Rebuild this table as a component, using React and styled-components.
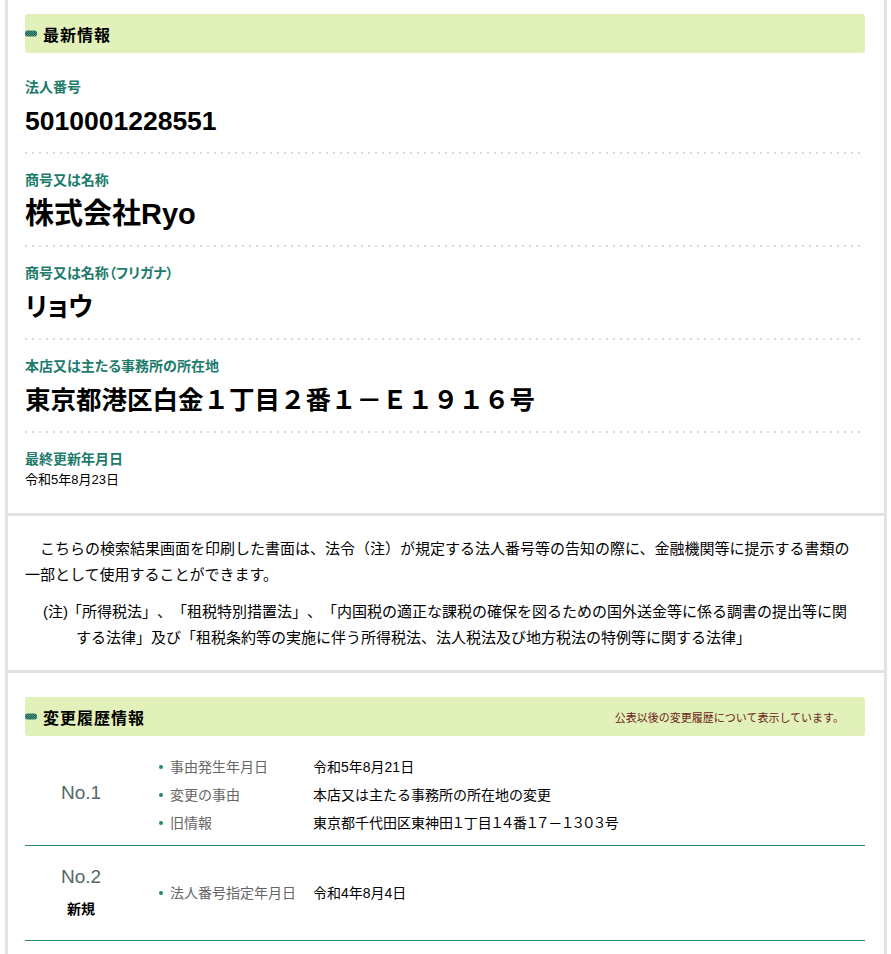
import React from 'react';
import styled, { createGlobalStyle } from 'styled-components';

const GlobalStyle = createGlobalStyle`
  body {
    margin: 0;
    background: #fff;
    color: #000;
    font-family: "Liberation Sans", "Noto Sans CJK JP", sans-serif;
    text-spacing-trim: space-all;
  }
`;

const Page = styled.div`
  margin: 0 4px 0 5px;
  min-height: 954px;
  border-left: 3px solid #e3e3e3;
  border-right: 3px solid #e3e3e3;
`;

const Section = styled.section`
  padding: ${(p) => p.$top}px 19px ${(p) => p.$bottom}px 17px;

  & + & {
    border-top: 3px solid #e3e3e3;
  }
`;

const Heading = styled.div`
  display: flex;
  align-items: center;
  height: 39px;
  padding-right: 21px;
  margin-bottom: ${(p) => p.$gap || 0}px;
  background: #e1f1b9;
  border-radius: 3px;
`;

const HeadingTitle = styled.h2`
  flex: 1;
  margin: 0 0 0 6px;
  font-size: 16px;
  font-weight: bold;
  letter-spacing: 1px;
`;

const HeadingNote = styled.span`
  font-size: 11px;
  color: #6a2418;
`;

const Field = styled.div`
  padding: 17px 0 16px;
  background-image: linear-gradient(to right, #d9d9d9 2px, transparent 2px);
  background-size: 7px 2px;
  background-repeat: repeat-x;
  background-position: left bottom;

  &:last-child {
    background: none;
  }
`;

const FieldLabel = styled.div`
  font-size: 14px;
  line-height: 18px;
  font-weight: bold;
  color: #1d7b6b;
  font-feature-settings: "palt";
  margin-bottom: ${(p) => (p.$small ? 3 : 8)}px;
`;

const FieldValue = styled.div`
  font-size: ${(p) => p.$size}px;
  line-height: 34px;
  font-weight: bold;
  font-feature-settings: ${(p) => (p.$prop ? '"palt"' : 'normal')};
  white-space: nowrap;
`;

const SmallValue = styled.div`
  font-size: 13px;
  line-height: 18px;
`;

const Notice = styled.p`
  margin: 0;
  padding-right: 10px;
  font-size: 15px;
  line-height: 26px;
  text-indent: 1em;
`;

const Note = styled.p`
  margin: 11px 0 0;
  padding: 0 10px 0 51px;
  text-indent: -33px;
  font-size: 15px;
  line-height: 26px;
`;

const NoteMark = styled.span`
  display: inline-block;
  width: 24px;
  text-indent: 0;
`;

const History = styled.div`
  margin-top: 9px;
`;

const HistoryRow = styled.div`
  display: grid;
  grid-template-columns: 112px 1fr;
  align-items: center;
  padding: 8px 0;
  border-bottom: 1px solid #2a8c6c;
`;

const RowHead = styled.div`
  padding: 8px 0 12px;
  text-align: center;
`;

const RowNo = styled.div`
  font-size: 19px;
  line-height: 30px;
  color: #56686a;
`;

const RowTag = styled.div`
  margin-top: 6px;
  font-size: 14px;
  line-height: 22px;
  font-weight: bold;
`;

const ItemList = styled.ul`
  list-style: none;
  margin: 0;
  padding: 0 0 0 22px;
`;

const Item = styled.li`
  display: flex;
  align-items: center;
  font-size: 14px;
  line-height: 28px;

  &::before {
    content: '';
    width: 4px;
    height: 4px;
    margin-right: 7px;
    border-radius: 50%;
    background: #1f8a68;
  }
`;

const ItemLabel = styled.span`
  width: 143px;
  flex-shrink: 0;
  color: #666;
`;

const ItemValue = styled.span`
  font-feature-settings: ${(p) => (p.$prop ? '"palt"' : 'normal')};
`;

const MarkIcon = () => (
  <svg width="12" height="7" viewBox="0 0 12 7">
    <defs>
      <pattern id="chk" width="2" height="2" patternUnits="userSpaceOnUse">
        <rect width="2" height="2" fill="#1c5f55" />
        <rect width="1" height="1" fill="#4c9686" />
        <rect x="1" y="1" width="1" height="1" fill="#4c9686" />
      </pattern>
    </defs>
    <rect x="0" y="0.5" width="12" height="6" rx="2.5" fill="url(#chk)" />
  </svg>
);

const fields = [
  { label: '法人番号', value: '5010001228551', size: 26.5 },
  { label: '商号又は名称', value: '株式会社Ryo', size: 29 },
  { label: '商号又は名称（フリガナ）', value: 'リョウ', size: 26, prop: true },
  { label: '本店又は主たる事務所の所在地', value: '東京都港区白金１丁目２番１－Ｅ１９１６号', size: 25.5 },
];

const history = [
  {
    no: 'No.1',
    items: [
      ['事由発生年月日', '令和5年8月21日'],
      ['変更の事由', '本店又は主たる事務所の所在地の変更'],
      ['旧情報', '東京都千代田区東神田１丁目１４番１７－１３０３号', true],
    ],
  },
  {
    no: 'No.2',
    tag: '新規',
    items: [['法人番号指定年月日', '令和4年8月4日']],
  },
];

export default function App() {
  return (
    <>
      <GlobalStyle />
      <Page>
        <Section $top={14} $bottom={8}>
          <Heading $gap={8}>
            <MarkIcon />
            <HeadingTitle>最新情報</HeadingTitle>
          </Heading>
          {fields.map((f) => (
            <Field key={f.label}>
              <FieldLabel>{f.label}</FieldLabel>
              <FieldValue $size={f.size} $prop={f.prop}>{f.value}</FieldValue>
            </Field>
          ))}
          <Field>
            <FieldLabel $small>最終更新年月日</FieldLabel>
            <SmallValue>令和5年8月23日</SmallValue>
          </Field>
        </Section>

        <Section $top={20} $bottom={19}>
          <Notice>
            こちらの検索結果画面を印刷した書面は、法令（注）が規定する法人番号等の告知の際に、金融機関等に提示する書類の一部として使用することができます。
          </Notice>
          <Note>
            <NoteMark>(注)</NoteMark>
            「所得税法」、「租税特別措置法」、「内国税の適正な課税の確保を図るための国外送金等に係る調書の提出等に関する法律」及び「租税条約等の実施に伴う所得税法、法人税法及び地方税法の特例等に関する法律」
          </Note>
        </Section>

        <Section $top={24} $bottom={14}>
          <Heading>
            <MarkIcon />
            <HeadingTitle>変更履歴情報</HeadingTitle>
            <HeadingNote>公表以後の変更履歴について表示しています。</HeadingNote>
          </Heading>
          <History>
            {history.map((row) => (
              <HistoryRow key={row.no}>
                <RowHead>
                  <RowNo>{row.no}</RowNo>
                  {row.tag && <RowTag>{row.tag}</RowTag>}
                </RowHead>
                <ItemList>
                  {row.items.map(([label, value, prop]) => (
                    <Item key={label}>
                      <ItemLabel>{label}</ItemLabel>
                      <ItemValue $prop={prop}>{value}</ItemValue>
                    </Item>
                  ))}
                </ItemList>
              </HistoryRow>
            ))}
          </History>
        </Section>
      </Page>
    </>
  );
}
